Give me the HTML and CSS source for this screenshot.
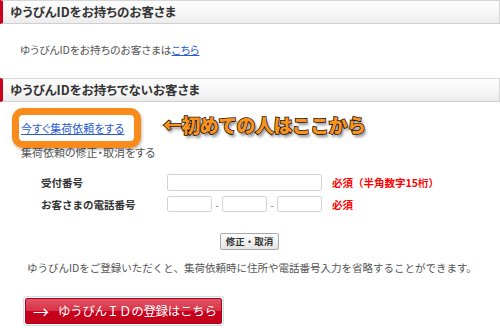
FILE: index.html
```html
<!DOCTYPE html>
<html lang="ja">
<head>
<meta charset="utf-8">
<title>集荷依頼</title>
<link rel="stylesheet" href="styles.css">
</head>
<body>
<div class="page">
  <h2 class="sec-head">ゆうびんIDをお持ちのお客さま</h2>
  <p class="intro">ゆうびんIDをお持ちのお客さまは<a class="link" href="#">こちら</a></p>

  <h2 class="sec-head">ゆうびんIDをお持ちでないお客さま</h2>
  <div class="request">
    <a class="link req-link" href="#">今すぐ集荷依頼をする</a>
    <p class="req-edit">集荷依頼の修正・取消をする</p>
    <span class="hl-box"></span>
    <span class="callout">←初めての人はここから</span>
  </div>

  <div class="form">
    <div class="row row-1">
      <span class="label">受付番号</span>
      <div class="fields"><span class="in in-long"></span></div>
      <span class="req">必須（半角数字15桁）</span>
    </div>
    <div class="row row-2">
      <span class="label">お客さまの電話番号</span>
      <div class="fields">
        <span class="in in-short"></span><span class="dash">-</span><span class="in in-short"></span><span class="dash">-</span><span class="in in-short"></span>
      </div>
      <span class="req">必須</span>
    </div>
  </div>

  <div class="btn-wrap"><button class="btn-gray" type="button">修正・取消</button></div>

  <p class="note">ゆうびんIDをご登録いただくと、集荷依頼時に住所や電話番号入力を省略することができます。</p>

  <a class="btn-red" href="#"><span class="arrow">→</span><span class="btn-red-text">ゆうびんＩＤの登録はこちら</span></a>
</div>
</body>
</html>
```

FILE: styles.css
```css
html, body {
  margin: 0;
  padding: 0;
  background: #fff;
}
body {
  font-family: "Noto Sans CJK JP", "Noto Sans", sans-serif;
  color: #555;
  width: 500px;
  height: 328px;
  overflow: hidden;
}
.page {
  position: relative;
  width: 500px;
}
.sec-head {
  margin: 0;
  height: 22px;
  line-height: 22px;
  border: 1px solid #d6d6d6;
  border-bottom-color: #cfcfcf;
  border-left: 3px solid #c8001e;
  background: linear-gradient(#fdfdfd, #f7f7f7 50%, #ececec);
  padding-left: 7px;
  font-size: 12.5px;
  font-weight: bold;
  color: #333;
  font-feature-settings: "palt";
  box-sizing: content-box;
  width: 489px;
}
.intro {
  margin: 18px 0 20px;
  padding-left: 20px;
  font-size: 10.7px;
  line-height: 16px;
  font-feature-settings: "palt";
}
.link {
  color: #2a5bd0;
  text-decoration: underline;
}
.request {
  position: relative;
  padding-top: 18px;
}
.req-link {
  display: block;
  margin-left: 21px;
  font-size: 11px;
  line-height: 16px;
  width: max-content;
  font-feature-settings: "palt";
}
.req-edit {
  margin: 8px 0 0 21px;
  font-size: 11px;
  line-height: 16px;
  font-feature-settings: "palt";
}
.hl-box {
  position: absolute;
  left: 12px;
  top: 6px;
  width: 115px;
  height: 26px;
  border: 7px solid #f98b1c;
  border-radius: 11px;
  background: transparent;
  box-shadow: 1px 2px 3px rgba(0,0,0,0.25);
}
.callout {
  position: absolute;
  left: 163px;
  top: 10px;
  font-size: 19px;
  font-weight: 900;
  line-height: 26px;
  color: #f7931e;
  letter-spacing: -0.6px;
  -webkit-text-stroke: 1.5px #1e1208;
  paint-order: stroke fill;
  text-shadow: 2px 3px 3px rgba(0,0,0,0.45);
}
.form {
  margin-top: 14px;
  padding-left: 41px;
}
.row {
  display: grid;
  grid-template-columns: 126px 165px auto;
  align-items: center;
}
.row-1 { height: 17px; }
.row-2 { height: 16px; margin-top: 5px; }
.label {
  font-size: 10.5px;
  font-weight: bold;
  color: #333;
}
.fields {
  display: flex;
  align-items: center;
  height: 100%;
}
.in {
  display: block;
  box-sizing: border-box;
  height: 100%;
  border: 1px solid #d4d4d4;
  border-radius: 2px;
  background: #fff;
}
.in-long { width: 155px; }
.in-short { width: 45px; }
.dash {
  width: 10px;
  text-align: center;
  font-size: 10px;
  color: #777;
}
.req {
  font-size: 10.5px;
  font-weight: bold;
  color: #f00;
}
.btn-wrap {
  margin-top: 21px;
  padding-left: 220px;
}
.btn-gray {
  display: block;
  width: 59px;
  height: 17px;
  padding: 0;
  border: 1px solid #a9a9a9;
  border-radius: 2px;
  background: linear-gradient(#fefefe, #e4e4e4);
  font-family: inherit;
  font-size: 9.5px;
  font-weight: bold;
  color: #333;
  line-height: 15px;
}
.note {
  margin: 10px 0 0 27px;
  font-size: 10.5px;
  line-height: 16px;
  white-space: nowrap;
}
.btn-red {
  display: flex;
  align-items: center;
  margin: 22px 0 0 25px;
  width: 197px;
  height: 26px;
  box-sizing: border-box;
  border: 1px solid #b0001a;
  border-radius: 2px;
  background: linear-gradient(#e05563, #d63346 48%, #c8001e 52%, #c4001a);
  box-shadow: 0 0 0 1px #fff, 0 0 0 2px #dcdcdc;
  color: #fff;
  text-decoration: none;
}
.arrow {
  width: 18px;
  margin-left: 7px;
  font-size: 16px;
  line-height: 24px;
}
.btn-red-text {
  margin-left: 7px;
  font-size: 12.5px;
  line-height: 24px;
  letter-spacing: -0.3px;
}
```
